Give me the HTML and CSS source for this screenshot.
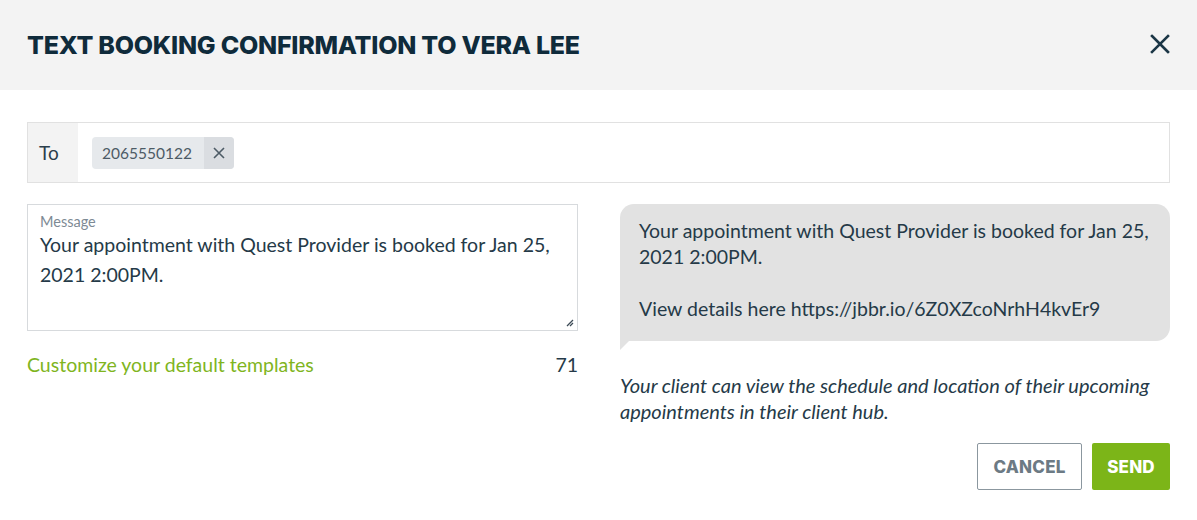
FILE: index.html
```html
<!DOCTYPE html>
<html>
<head>
<meta charset="utf-8">
<link rel="stylesheet" href="styles.css">
</head>
<body>
<div class="modal">
  <div class="header">
    <h1 class="title">TEXT BOOKING CONFIRMATION TO VERA LEE</h1>
    <button class="close" aria-label="Close">
      <svg width="20" height="20" viewBox="0 0 20 20"><path d="M2 2L18 18M18 2L2 18" stroke="#1b3646" stroke-width="2.6" stroke-linecap="square" fill="none"/></svg>
    </button>
  </div>
  <div class="body">
    <div class="to-row">
      <div class="to-label">To</div>
      <div class="to-field">
        <div class="chip">
          <span class="chip-text">2065550122</span>
          <span class="chip-x"><svg width="12" height="12" viewBox="0 0 12 12"><path d="M1 1L11 11M11 1L1 11" stroke="#4d5b66" stroke-width="1.6" fill="none"/></svg></span>
        </div>
      </div>
    </div>
    <div class="columns">
      <div class="left">
        <div class="textarea">
          <div class="ta-label">Message</div>
          <div class="ta-text">Your appointment with Quest Provider is booked for Jan 25, 2021 2:00PM.</div>
          <svg class="grip" width="10" height="10" viewBox="0 0 10 10"><path d="M9 3L3 9M9 6L6 9" stroke="#3b4a55" stroke-width="1.3" fill="none"/></svg>
        </div>
        <div class="meta">
          <a class="link">Customize your default templates</a>
          <span class="count">71</span>
        </div>
      </div>
      <div class="right">
        <div class="bubble">
          <p>Your appointment with Quest Provider is booked for Jan 25, 2021 2:00PM.</p>
          <p>View details here https://jbbr.io/6Z0XZcoNrhH4kvEr9</p>
        </div>
        <p class="note">Your client can view the schedule and location of their upcoming appointments in their client hub.</p>
        <div class="actions">
          <button class="btn cancel">CANCEL</button>
          <button class="btn send">SEND</button>
        </div>
      </div>
    </div>
  </div>
</div>
</body>
</html>
```
FILE: styles.css
```css
* { box-sizing: border-box; }
html, body { margin: 0; padding: 0; background: #fff; }
body { width: 1197px; height: 520px; overflow: hidden; font-family: Lato, "Noto Sans", sans-serif; color: #253a48; }
.header { height: 90px; background: #f3f3f3; display: flex; align-items: center; justify-content: space-between; padding: 0 27px 0 27px; }
.title { margin: 0; font-family: Inter, sans-serif; font-weight: 800; font-size: 25px; letter-spacing: -0.25px; color: #0f2b3b; }
.close { border: 0; background: none; padding: 0; width: 20px; height: 20px; display: flex; margin-top: -2px; }
.body { padding: 32px 27px 0 27px; }
.to-row { height: 61px; border: 1px solid #e1e1e1; display: flex; }
.to-label { width: 50px; background: #f3f3f3; display: flex; align-items: center; padding-left: 11px; font-size: 19px; color: #2b3e4b; }
.to-field { flex: 1; display: flex; align-items: center; padding-left: 14px; }
.chip { display: flex; height: 32px; border-radius: 4px; overflow: hidden; background: #e6e9ec; }
.chip-text { display: flex; align-items: center; padding: 0 12px 0 10px; font-size: 15.5px; color: #4d5b66; }
.chip-x { width: 30px; background: #dadde1; display: flex; align-items: center; justify-content: center; }
.columns { display: flex; gap: 42px; margin-top: 21px; }
.left { width: 551px; }
.right { width: 550px; }
.textarea { position: relative; height: 127px; border: 1px solid #d7dadd; padding: 8px 12px; }
.ta-label { font-size: 14.5px; color: #7d8a94; line-height: 17px; }
.ta-text { font-size: 19.5px; line-height: 30px; color: #253a48; }
.grip { position: absolute; right: 3px; bottom: 3px; }
.meta { display: flex; justify-content: space-between; align-items: center; margin-top: 22px; font-size: 19.5px; }
.link { color: #80b51e; }
.count { color: #253a48; }
.bubble { position: relative; background: #e2e2e2; border-radius: 14px 14px 14px 0; padding: 14px 19px 19px 19px; font-size: 19.5px; line-height: 26px; color: #253a48; }
.bubble p { margin: 0; }
.bubble p + p { margin-top: 26px; }
.bubble::after { content: ""; position: absolute; left: 0; bottom: -9px; border-left: 9px solid #e2e2e2; border-bottom: 9px solid transparent; }
.note { margin: 31px 0 0 0; font-style: italic; font-size: 20px; line-height: 26px; color: #253a48; }
.actions { display: flex; justify-content: flex-end; gap: 10px; margin-top: 19px; }
.btn { height: 47px; font-family: Inter, sans-serif; font-weight: 800; font-size: 17px; letter-spacing: 0.2px; border-radius: 2px; cursor: pointer; }
.cancel { width: 105px; background: #fff; border: 1px solid #8b979f; color: #6c7a84; }
.send { width: 78px; background: #7cb518; border: 0; color: #fff; }
```
